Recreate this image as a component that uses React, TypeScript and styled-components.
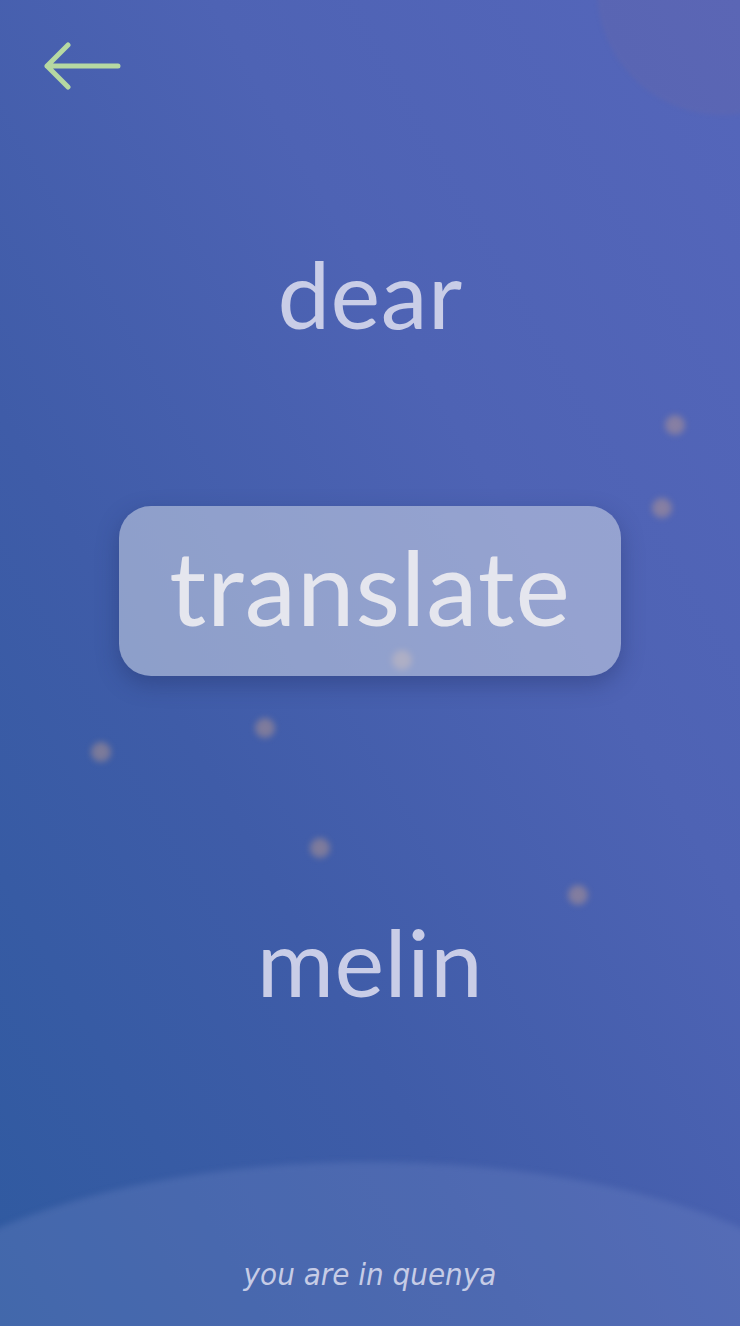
import React from 'react';
import styled, { createGlobalStyle } from 'styled-components';

const GlobalStyle = createGlobalStyle`
  html, body {
    margin: 0;
    padding: 0;
    height: 100%;
  }
  body {
    font-family: Lato, "Noto Sans", sans-serif;
    background: #3f5aa8;
  }
`;

const dots = [
  { x: 675, y: 425 },
  { x: 662, y: 508 },
  { x: 402, y: 660 },
  { x: 265, y: 728 },
  { x: 101, y: 752 },
  { x: 320, y: 848 },
  { x: 578, y: 895 },
];

const Screen = styled.div`
  position: relative;
  overflow: hidden;
  width: 740px;
  height: 1326px;
  display: flex;
  flex-direction: column;
  background: linear-gradient(60deg, #2f5aa0 0%, #3f5ca8 35%, #4e63b4 65%, #5566bb 100%);
`;

const Moon = styled.div`
  position: absolute;
  top: -135px;
  left: 597px;
  width: 250px;
  height: 250px;
  border-radius: 50%;
  background: rgba(115, 105, 160, 0.22);
  filter: blur(2px);
`;

const Hill = styled.div`
  position: absolute;
  left: -140px;
  right: -140px;
  top: 1162px;
  height: 420px;
  border-radius: 50%;
  background: rgba(120, 140, 200, 0.28);
  filter: blur(3px);
`;

const Star = styled.span`
  position: absolute;
  width: 20px;
  height: 20px;
  margin: -10px 0 0 -10px;
  border-radius: 50%;
  background: rgba(200, 160, 140, 0.45);
  filter: blur(3px);
`;

const TopBar = styled.header`
  position: relative;
  z-index: 1;
  display: flex;
  padding: 42px 0 0 43px;
`;

const BackButton = styled.button`
  border: 0;
  background: none;
  padding: 0;
  cursor: pointer;
  width: 80px;
  height: 48px;
  display: flex;
`;

const Words = styled.main`
  position: relative;
  z-index: 1;
  display: flex;
  flex-direction: column;
  align-items: center;
  padding-top: 156px;
`;

const Word = styled.div`
  font-size: 94px;
  line-height: 1;
  color: #c9cde7;
  letter-spacing: 0.5px;
`;

const TranslateButton = styled.button`
  margin-top: 166px;
  width: 502px;
  height: 170px;
  border: 0;
  border-radius: 32px;
  background: rgba(220, 225, 235, 0.5);
  box-shadow: 0 8px 22px rgba(30, 40, 90, 0.35);
  font-family: Lato, "Noto Sans", sans-serif;
  font-size: 103px;
  line-height: 1;
  color: #e5e6ee;
  padding: 0 0 10px;
  letter-spacing: 1px;
  cursor: pointer;
`;

const Answer = styled(Word)`
  margin-top: 238px;
`;

const Footer = styled.footer`
  position: relative;
  z-index: 1;
  margin-top: auto;
  padding-bottom: 34px;
  text-align: center;
  font-family: "DejaVu Sans Condensed", "DejaVu Sans", sans-serif;
  font-stretch: condensed;
  font-size: 31px;
  font-style: italic;
  color: #c6cce6;
`;

export default function App() {
  return (
    <>
      <GlobalStyle />
      <Screen>
        <Moon />
        <Hill />
        {dots.map((d, i) => (
          <Star key={i} style={{ left: d.x, top: d.y }} />
        ))}
        <TopBar>
          <BackButton aria-label="back">
            <svg width="80" height="48" viewBox="0 0 80 48" fill="none">
              <path
                d="M4 24 H75 M25 3 L4 24 L25 45"
                stroke="#b6d9a2"
                strokeWidth="5"
                strokeLinecap="round"
                strokeLinejoin="round"
              />
            </svg>
          </BackButton>
        </TopBar>
        <Words>
          <Word>dear</Word>
          <TranslateButton>translate</TranslateButton>
          <Answer>melin</Answer>
        </Words>
        <Footer>you are in quenya</Footer>
      </Screen>
    </>
  );
}
